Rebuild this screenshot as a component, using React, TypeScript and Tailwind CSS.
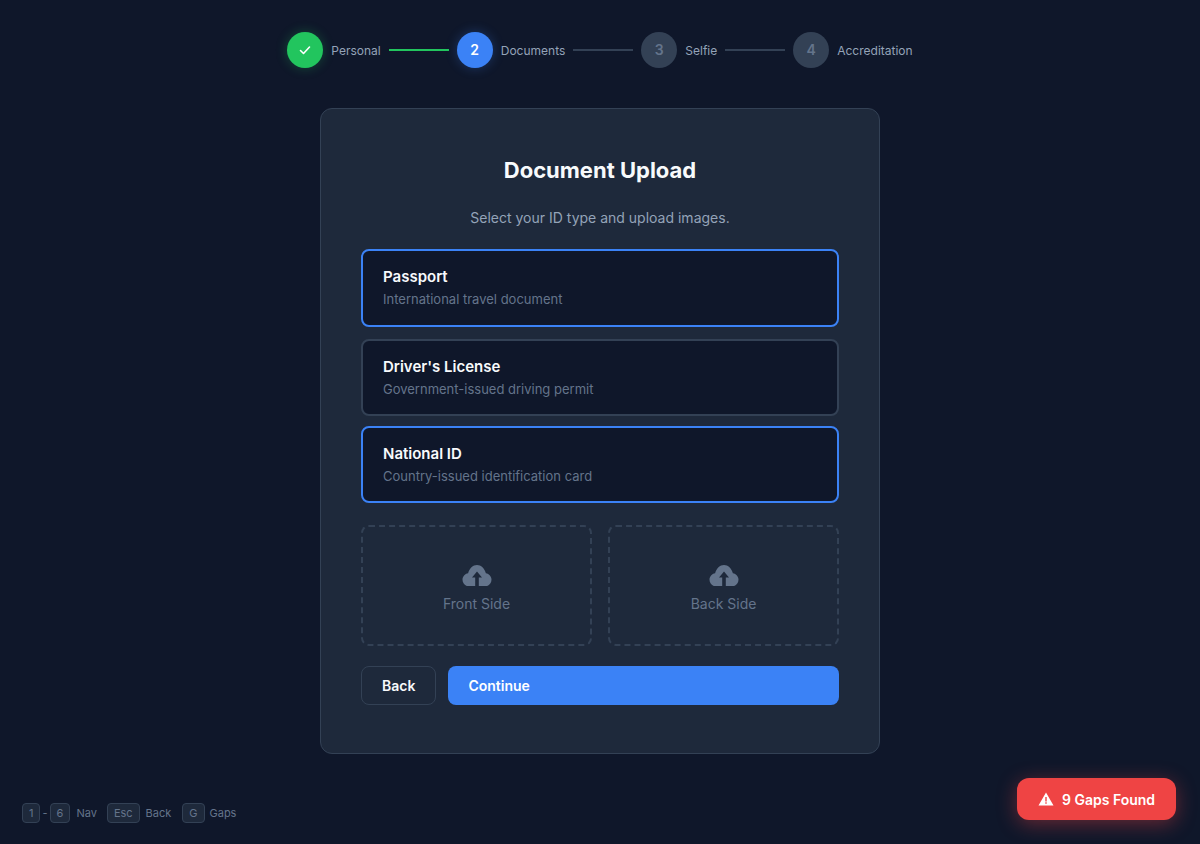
import React from 'react'

interface Step {
  label: string;
  num: string;
  state: 'done' | 'active' | 'todo';
}

const steps: Step[] = [
  { label: 'Personal', num: '1', state: 'done' },
  { label: 'Documents', num: '2', state: 'active' },
  { label: 'Selfie', num: '3', state: 'todo' },
  { label: 'Accreditation', num: '4', state: 'todo' },
]

const options = [
  { title: 'Passport', desc: 'International travel document', selected: true, box: 'h-[78px] mb-3' },
  { title: "Driver's License", desc: 'Government-issued driving permit', selected: false, box: 'h-[77px] mb-2.5' },
  { title: 'National ID', desc: 'Country-issued identification card', selected: true, box: 'h-[77px]' },
]

function CloudIcon() {
  return (
    <svg width="30" height="22" viewBox="0 0 30 22" className="mb-2">
      <path
        fill="#64748b"
        d="M7.5 22.500C3.6 22.500.5 19.500.5 15.700c0-3.200 2.400-5.900 5.600-6.500C7.400 4.400 10.900 1 15 1s7.600 3.400 8.900 8.200c3.200.6 5.600 3.300 5.600 6.500 0 3.800-3.100 6.800-7 6.800z"
      />
      <path fill="#1e293b" d="M15 7.500l-5 6h3.200v8.500h3.600V13.500H20z" />
    </svg>
  )
}

function StepItem({ step }: { step: Step }) {
  return (
    <div className="flex items-center gap-2">
      {step.state === 'done' && (
        <div className="w-9 h-9 rounded-full bg-[#22c55e] shadow-[0_0_12px_rgba(34,197,94,0.3)] flex items-center justify-center">
          <svg width="14" height="14" viewBox="0 0 14 14" fill="none" stroke="white" strokeWidth="1.6" strokeLinecap="round" strokeLinejoin="round">
            <path d="M2.500 7.500l3 3 6-6.500" />
          </svg>
        </div>
      )}
      {step.state === 'active' && (
        <div className="w-9 h-9 rounded-full bg-[#3b82f6] shadow-[0_0_12px_rgba(59,130,246,0.3)] flex items-center justify-center text-sm font-semibold text-white">
          {step.num}
        </div>
      )}
      {step.state === 'todo' && (
        <div className="w-9 h-9 rounded-full bg-[#334155] flex items-center justify-center text-sm font-semibold text-[#64748b]">
          {step.num}
        </div>
      )}
      <span className="mt-0.5 text-xs leading-4 text-[#94a3b8]">{step.label}</span>
    </div>
  )
}

function Key({ children }: { children: React.ReactNode }) {
  return (
    <span className="h-5 px-1.5 flex items-center justify-center rounded bg-[#1e293b] border border-[#334155] text-[11px] text-[#64748b]">
      {children}
    </span>
  )
}

export default function App() {
  return (
    <div className="relative min-h-[844px] bg-[#0f172a] font-['Inter',sans-serif] flex flex-col items-center pt-8">
      {/* stepper */}
      <div className="flex items-center gap-2 mb-10">
        {steps.map((step, i) => (
          <React.Fragment key={step.label}>
            <StepItem step={step} />
            {i < steps.length - 1 && (
              <div className={`w-[60px] h-0.5 ${step.state === 'done' ? 'bg-[#22c55e]' : 'bg-[#334155]'}`} />
            )}
          </React.Fragment>
        ))}
      </div>

      {/* card */}
      <div className="w-[560px] h-[646px] bg-[#1e293b] border border-[#334155] rounded-xl p-10">
        <h1 className="text-[22px] leading-[42px] font-bold text-[#f8fafc] text-center mb-4">Document Upload</h1>
        <p className="text-sm leading-[22px] text-[#94a3b8] text-center mb-5">Select your ID type and upload images.</p>

        <div className="flex flex-col mb-[22px]">
          {options.map(opt => (
            <div
              key={opt.title}
              className={`${opt.box} rounded-lg bg-[#0f172a] border-2 px-5 pb-0.5 flex flex-col justify-center ${opt.selected ? 'border-[#3b82f6]' : 'border-[#334155]'}`}
            >
              <div className="text-[15px] leading-6 font-semibold text-[#f8fafc]">{opt.title}</div>
              <div className="text-[13px] leading-5 text-[#64748b]">{opt.desc}</div>
            </div>
          ))}
        </div>

        <div className="grid grid-cols-2 gap-4 mb-5">
          {['Front Side', 'Back Side'].map(side => (
            <div key={side} className="h-[121px] pt-[7px] rounded-lg border-2 border-dashed border-[#334155] flex flex-col items-center justify-center">
              <CloudIcon />
              <span className="text-sm leading-5 text-[#64748b]">{side}</span>
            </div>
          ))}
        </div>

        <div className="flex gap-3">
          <button className="h-[39px] px-5 rounded-lg border border-[#334155] text-sm font-semibold text-[#f8fafc]">Back</button>
          <button className="h-[39px] flex-1 px-5 rounded-lg bg-[#3b82f6] text-sm font-semibold text-white text-left">Continue</button>
        </div>
      </div>

      {/* keyboard hints */}
      <div className="absolute left-[22px] bottom-[21px] flex items-center text-[11px] text-[#64748b]">
        <Key>1</Key>
        <span className="mx-0.5">-</span>
        <Key>6</Key>
        <span className="ml-1.5 mr-2.5">Nav</span>
        <Key>Esc</Key>
        <span className="ml-1.5 mr-[11px]">Back</span>
        <Key>G</Key>
        <span className="ml-[5px]">Gaps</span>
      </div>

      {/* gaps badge */}
      <div className="absolute right-6 bottom-6 h-[42px] w-[159px] rounded-xl bg-[#ef4444] shadow-[0_4px_20px_rgba(239,68,68,0.4)] flex items-center justify-center gap-2 text-sm font-semibold text-white">
        <svg width="16" height="16" viewBox="0 0 16 16">
          <path fill="white" fillRule="evenodd" d="M8 1.500L.5 14.500h15zM7.300 6h1.400v4.500H7.300zM7.300 11.300h1.400v1.400H7.300z" />
        </svg>
        <span className="mt-0.5">9 Gaps Found</span>
      </div>
    </div>
  )
}
